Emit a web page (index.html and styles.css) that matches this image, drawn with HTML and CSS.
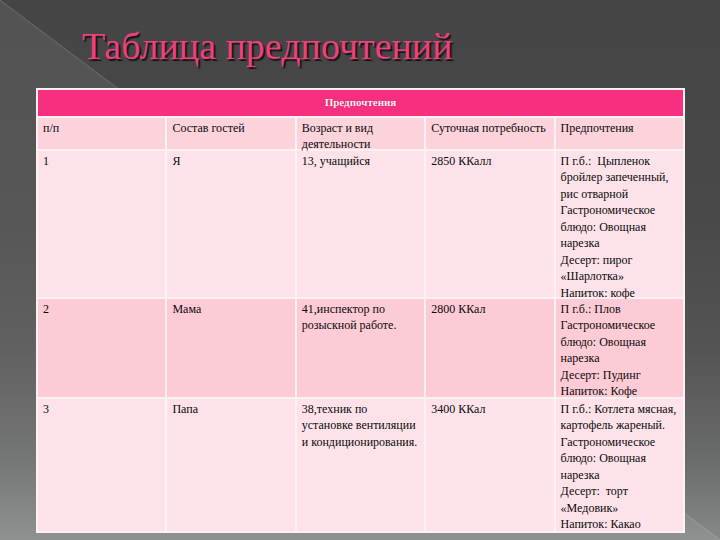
FILE: index.html
```html
<!DOCTYPE html>
<html lang="ru">
<head>
<meta charset="utf-8">
<title>Таблица предпочтений</title>
<link rel="stylesheet" href="styles.css">
</head>
<body>
<div class="slide">
  <h1 class="title">Таблица предпочтений</h1>
  <div class="grid">
    <div class="banner">Предпочтения</div>

    <div class="cell head">п/п</div>
    <div class="cell head">Состав гостей</div>
    <div class="cell head">Возраст и вид<br>деятельности</div>
    <div class="cell head">Суточная потребность</div>
    <div class="cell head">Предпочтения</div>

    <div class="cell light">1</div>
    <div class="cell light">Я</div>
    <div class="cell light">13, учащийся</div>
    <div class="cell light">2850 ККалл</div>
    <div class="cell light">П г.б.:&nbsp; Цыпленок<br>бройлер запеченный,<br>рис отварной<br>Гастрономическое<br>блюдо: Овощная<br>нарезка<br>Десерт: пирог<br>«Шарлотка»<br>Напиток: кофе</div>

    <div class="cell dark">2</div>
    <div class="cell dark">Мама</div>
    <div class="cell dark">41,инспектор по<br>розыскной работе.</div>
    <div class="cell dark">2800 ККал</div>
    <div class="cell dark">П г.б.: Плов<br>Гастрономическое<br>блюдо: Овощная<br>нарезка<br>Десерт: Пудинг<br>Напиток: Кофе</div>

    <div class="cell light">3</div>
    <div class="cell light">Папа</div>
    <div class="cell light">38,техник по<br>установке вентиляции<br>и кондиционирования.</div>
    <div class="cell light">3400 ККал</div>
    <div class="cell light">П г.б.: Котлета мясная,<br>картофель жареный.<br>Гастрономическое<br>блюдо: Овощная<br>нарезка<br>Десерт:&nbsp; торт<br>«Медовик»<br>Напиток: Какао</div>
  </div>
</div>
</body>
</html>
```

FILE: styles.css
```css
html, body {
  margin: 0;
  padding: 0;
}

body {
  width: 720px;
  height: 540px;
  overflow: hidden;
  font-family: "Liberation Serif", "Times New Roman", serif;
}

.slide {
  width: 720px;
  height: 540px;
  box-sizing: border-box;
  padding-top: 24px;
  background:
    linear-gradient(to top right, rgba(255,255,255,0) calc(50% - 1px), rgba(255,255,255,0.14) 50%, rgba(255,255,255,0) calc(50% + 1px)),
    linear-gradient(to top right, rgba(255,255,255,0.075) 50%, rgba(255,255,255,0) 50%),
    linear-gradient(to bottom, #454545 0%, #494949 40%, #545454 65%, #6a6b6b 85%, #858988 100%);
}

.title {
  margin: 0 0 19px 82px;
  font-size: 38px;
  line-height: 45px;
  font-weight: normal;
  color: #ef3f7c;
  text-shadow: 2px 2px 1px #151515;
  white-space: nowrap;
}

.grid {
  margin-left: 36px;
  width: 649px;
  box-sizing: border-box;
  padding: 2px;
  background: #fdf1f4;
  display: grid;
  grid-template-columns: repeat(5, 1fr);
  grid-template-rows: 26px 31px 146px 98px 132px;
  gap: 2px;
}

.banner {
  grid-column: 1 / -1;
  background: #f6307e;
  color: #fff0f5;
  font-weight: bold;
  font-size: 11px;
  line-height: 24px;
  text-align: center;
  text-shadow: 0 0 1px #b0104f;
}

.cell {
  font-size: 12px;
  line-height: 16.45px;
  color: #0a0a0a;
  padding: 2px 4px 0 5px;
  white-space: nowrap;
  min-width: 0;
}

.head {
  background: #fcd2db;
}

.light {
  background: #fde3e9;
}

.dark {
  background: #fdcbd5;
}
```
